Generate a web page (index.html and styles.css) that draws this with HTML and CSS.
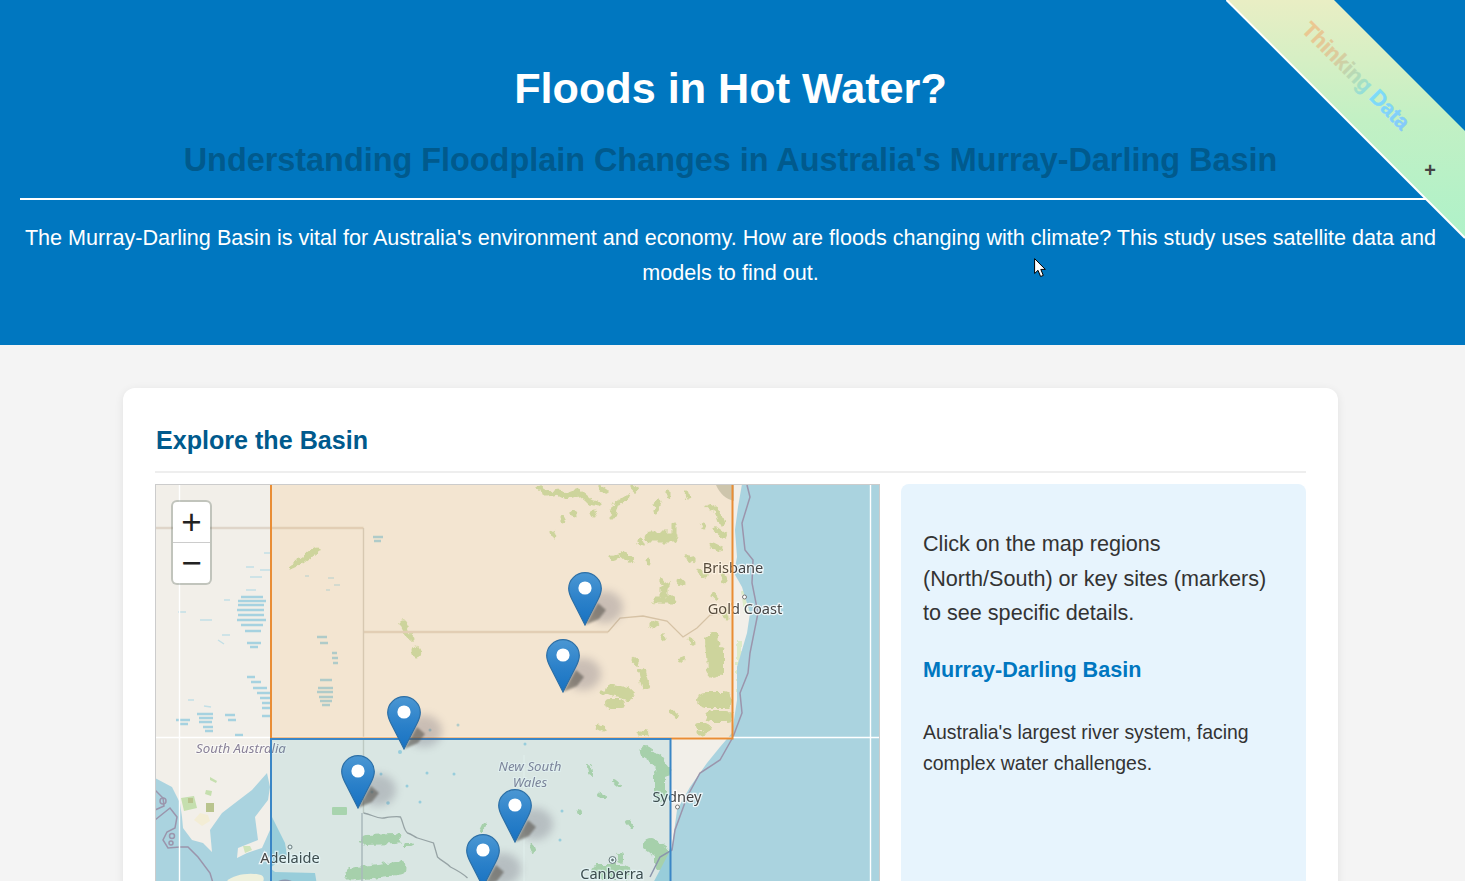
FILE: index.html
```html
<!DOCTYPE html>
<html lang="en">
<head>
  <meta charset="UTF-8" />
  <meta name="viewport" content="width=device-width, initial-scale=1.0"/>
  <title>Floods in Hot Water?</title>
  <link rel="stylesheet" href="styles.css">
</head>
<body>
  <header class="site-header">
    <h1>Floods in Hot Water?</h1>
    <h2 class="subtitle">Understanding Floodplain Changes in Australia's Murray-Darling Basin</h2>
    <hr class="header-rule" />
    <p class="intro">The Murray-Darling Basin is vital for Australia's environment and economy. How are floods changing with climate? This study uses satellite data and models to find out.</p>

    <!-- corner ribbon -->
    <svg class="ribbon" viewBox="1226 0 239 240" width="239" height="240" aria-label="Thinking Data">
      <defs>
        <linearGradient id="bandFill" gradientUnits="userSpaceOnUse" x1="0" y1="0" x2="0" y2="240">
          <stop offset="0" stop-color="#e9eec4"/>
          <stop offset="0.5" stop-color="#c2f0c4"/>
          <stop offset="1" stop-color="#aef2c9"/>
        </linearGradient>
        <linearGradient id="ribbonText" x1="0" y1="0" x2="1" y2="0">
          <stop offset="0" stop-color="#edc78f"/>
          <stop offset="0.3" stop-color="#dccb9c"/>
          <stop offset="0.55" stop-color="#a8dfc0"/>
          <stop offset="0.68" stop-color="#7cdcf8"/>
          <stop offset="1" stop-color="#86c8fb"/>
        </linearGradient>
      </defs>
      <polygon points="1226,0 1334,0 1465,131 1465,238" fill="url(#bandFill)"/>
      <line x1="1226.5" y1="0" x2="1465" y2="238" stroke="#fff" stroke-width="2"/>
      <text class="ribbon-text" x="1356" y="76" transform="rotate(45 1356 76)" dy="7" text-anchor="middle" fill="url(#ribbonText)" stroke="url(#ribbonText)">Thinking Data</text>
      <text class="ribbon-plus" x="1430" y="177" text-anchor="middle">+</text>
    </svg>
  </header>

  <main class="content">
    <section class="card">
      <h2 class="card-title">Explore the Basin</h2>
      <div class="explore-grid">
        <div class="map">
          <svg class="map-canvas" viewBox="156 485 723 498" width="723" height="498">
            <defs>
              <filter id="soft" x="-5%" y="-5%" width="110%" height="110%"><feGaussianBlur stdDeviation="0.6"/></filter>
              <filter id="labelSoft" x="-5%" y="-20%" width="110%" height="140%"><feGaussianBlur stdDeviation="0.25"/></filter>
              <filter id="rough" filterUnits="userSpaceOnUse" x="156" y="485" width="723" height="498">
                <feTurbulence type="fractalNoise" baseFrequency="0.16" numOctaves="2" seed="7" result="noise"/>
                <feDisplacementMap in="SourceGraphic" in2="noise" scale="7" xChannelSelector="R" yChannelSelector="G"/>
              </filter>
              <filter id="blurWide" x="-80%" y="-80%" width="260%" height="260%"><feGaussianBlur stdDeviation="4.5"/></filter>
              <filter id="blurTight" x="-30%" y="-30%" width="160%" height="160%"><feGaussianBlur stdDeviation="0.9"/></filter>
              <linearGradient id="pinFill" x1="0" y1="0" x2="0" y2="1">
                <stop offset="0" stop-color="#4b97d3"/>
                <stop offset="0.55" stop-color="#2a80c9"/>
                <stop offset="1" stop-color="#1872c2"/>
              </linearGradient>
              <g id="pin">
                <ellipse cx="20" cy="-18" rx="18" ry="16" fill="#5f5a6c" opacity="0.28" filter="url(#blurWide)"/>
                <path d="M0 0L13-22 21-15 14-6z" fill="#5a5650" opacity="0.6" filter="url(#blurTight)"/>
                <path d="M0 0L-13-25.5C-15-29.5-16.3-33-16.3-36.5-16.3-45-9-52.3 0-52.3S16.3-45 16.3-36.5C16.3-33 15-29.5 13-25.5z" fill="url(#pinFill)" stroke="#2c6fa6" stroke-width="1.2"/>
                <circle cx="0" cy="-37" r="6.6" fill="#fff"/>
              </g>
            </defs>

            <!-- base tiles -->
            <g filter="url(#soft)">
              <rect x="156" y="485" width="723" height="498" fill="#f2efe9"/>

              <!-- scrub and forest -->
              <g filter="url(#rough)">
                <g fill="none" stroke="#c8dcae" stroke-linecap="round" stroke-linejoin="round">
                  <g stroke-width="5">
                    <path d="M292 566l10-5"/><path d="M302 560l14-10" stroke-width="7"/>
                    <path d="M538 488l10 6 10-2 8 4 12-4 12 10 8 2"/><path d="M612 517l4-14"/><path d="M618 503l10-6"/>
                    <path d="M655 512l3-10"/><path d="M668 492v4"/><path d="M687 493l1 4"/><path d="M573 512l1 3"/>
                    <path d="M562 518l1 2"/><path d="M593 513l1 2"/><path d="M553 532l1 3"/><path d="M708 506l10 6 4 12"/>
                    <path d="M716 530l8 6"/><path d="M703 525l1 2"/><path d="M712 545l8 4"/><path d="M688 557l4 3"/>
                    <path d="M612 558l6-2"/><path d="M622 553l8 7"/><path d="M640 542l2 1"/><path d="M648 561v1"/>
                    <path d="M713 595l3 3"/><path d="M652 625l5-2"/><path d="M680 660l3-1"/><path d="M690 640l3 3"/>
                    <path d="M600 487l6 4"/><path d="M633 486l3 3"/><path d="M700 572l5 3"/><path d="M680 580l3 3"/>
                    <path d="M598 727l6 3"/><path d="M640 733l7 1"/><path d="M700 733l8-3"/><path d="M634 660l3 3"/>
                    <path d="M662 636l2 2"/><path d="M726 610l1 8"/><path d="M722 574l2 6"/><path d="M672 712l4 3"/>
                  </g>
                  <path d="M650 537h22" stroke-width="11"/><path d="M674 534v-10" stroke-width="5"/>
                  <path d="M662 582l6 4" stroke-width="5"/><path d="M656 600h16" stroke-width="7"/><path d="M664 588v12" stroke-width="7"/>
                  <path d="M712 640l2 30" stroke-width="14"/><path d="M720 650v22" stroke-width="8"/>
                  <path d="M706 700h18" stroke-width="16"/><path d="M712 716h14" stroke-width="12"/><path d="M698 726h8" stroke-width="6"/>
                  <path d="M612 690l16 4" stroke-width="12"/><path d="M610 704h10" stroke-width="10"/><path d="M602 692h4" stroke-width="5"/>
                  <path d="M642 672l4 14" stroke-width="8"/>
                  <path d="M403 624l3 6" stroke-width="7"/><path d="M406 632l6 6" stroke-width="5"/><path d="M416 650l1 3" stroke-width="9"/>
                </g>
                <g fill="none" stroke="#b9d6ab" stroke-linecap="round" stroke-linejoin="round">
                  <path d="M645 752l12 8 8 12" stroke-width="12"/><path d="M660 775v20" stroke-width="12"/>
                  <path d="M650 845l12 8v12" stroke-width="14"/><path d="M598 872h26" stroke-width="14"/><path d="M620 855v5" stroke-width="6"/>
                  <path d="M366 840l30-1" stroke-width="10"/><path d="M352 874l48-6" stroke-width="13"/>
                  <g stroke-width="4">
                    <path d="M590 765l1 8"/><path d="M615 782l4 3"/><path d="M578 810l3 3"/><path d="M628 822l3 4"/>
                    <path d="M405 845h6"/><path d="M532 845l1 6"/><path d="M485 825l-3 6"/><path d="M600 795l3 3"/>
                  </g>
                </g>
                <path d="M733 745l-14 14-14 20-14 22-12 20" fill="none" stroke="#d3e6bd" stroke-width="6"/>
                <path d="M739 640v70M743 590l3 24" fill="none" stroke="#dcebc8" stroke-width="4"/>
              </g>
              <rect x="332" y="807" width="15" height="8" rx="1" fill="#bcdbae"/>
              <g fill="#c5dfae"><path d="M181 798l13-2 3 12-13 3z"/><path d="M206 790l6 1-1 5-6-2z"/><path d="M210 777l7 4-1 2-6-3z"/></g>
              <g fill="#b9c48e"><rect x="206" y="803" width="8" height="9"/><rect x="188" y="798" width="5" height="5"/></g>
              <path d="M200 813l8 2 2 6-8 5-8-6z" fill="#f3edd5"/>

              <!-- salt lakes -->
              <g fill="none" stroke="#a6d2e0" stroke-width="2.6">
                <path d="M241 597h22M238 601h28M238 605h26M237 610h27M238 615h26M237 620h29M241 625h22M245 631h16"/>
                <path d="M247 643h14M250 647h8"/>
                <path d="M247 677h8M251 682h10M253 688h14M257 693h13M260 698h10M262 703h8M262 708h9M262 716h9"/>
                <path d="M197 714h16M199 718h14M199 722h13M203 727h10M205 731h8"/>
                <path d="M176 720h14M180 724h8M225 715h10M228 720h8M235 735h8"/>
                <path d="M320 680h12M318 688h15M317 692h16M319 697h14M320 701h12M322 705h8"/>
                <path d="M332 653h5M332 658h6M333 663h5M317 637h10M320 643h8"/>
                <path d="M373 537h10M374 541h7"/>
              </g>
              <g fill="none" stroke="#c2dfe6" stroke-width="1.4">
                <path d="M204 706l7 1M188 700h6M218 640l6 4M222 635h8M260 570h10M250 577h12M246 567h8M264 553h8"/>
                <path d="M305 576h4M328 578h6M334 585h6M326 590h4M246 590h10M224 600h6M178 612h8M200 620h12"/>
              </g>
              <g fill="#a9d3e1">
                <circle cx="400" cy="752" r="2"/><circle cx="372" cy="792" r="1.5"/><circle cx="427" cy="773" r="1.5"/>
                <circle cx="454" cy="774" r="1.5"/><circle cx="407" cy="786" r="1.5"/><circle cx="388" cy="803" r="1.8"/>
                <circle cx="381" cy="774" r="1.5"/><circle cx="420" cy="802" r="1.5"/><circle cx="479" cy="855" r="1.5"/>
                <circle cx="560" cy="840" r="1.5"/><circle cx="562" cy="811" r="1.5"/><circle cx="525" cy="744" r="1.5"/>
                <circle cx="430" cy="730" r="1.5"/><circle cx="458" cy="725" r="1.5"/><circle cx="560" cy="684" r="1"/>
              </g>

              <!-- state borders -->
              <g fill="none" stroke="#dfd5c9" stroke-width="2.400">
                <path d="M156 528H363.5"/>
                <path d="M364 632H608" />
                <path d="M363.5 528V813" stroke="#d3cfc6" stroke-width="1.400"/>
                <path d="M608 632L620 618 643 616 667 621 683 637 697 628 710 615 725 613 733 602" stroke="#d2c8b8" stroke-width="1.300"/>
              </g>
              <path d="M363.5 813c8 1 13 6 20 5s13-2 17-1c3 6 3 13 7 16 4 1 7 4 10 5l16 5 4 14c4 4 8 5 13 10 6 3 12 6 17 11" fill="none" stroke="#a8a4a4" stroke-width="1.3"/>
              <path d="M362 813V985" fill="none" stroke="#bdbdbd" stroke-width="1.5"/>
              <path d="M524 755V883" fill="none" stroke="#fff" stroke-width="1" opacity="0.6"/>

              <!-- urban bay -->
              <path d="M716 485h18v16c-8-2-14-7-18-16z" fill="#c8cbc0"/>

              <!-- water -->
              <g fill="#aad3df">
                <path d="M742 484L738 507 735 530 737 557 734 573 742 587 750 613 747 633 737 667 737 700 732 733 720 747 707 763 690 787 677 810 672 847 660 870 652 885H880V484z"/>
                <path d="M155 778L172 787 180 803 182 817 183 828 192 840 203 843 212 852 210 830 222 813 235 803 252 790 267 773 270 787 268 800 255 817 258 840 238 848 237 858 247 853 262 848 270 830 272 817 285 843 287 855 270 868 275 872 315 873 317 885H155z"/>
              </g>
              <path d="M227 881c6-6 22-9 34-6 4 2 3 6 1 8z" fill="#eef0dc"/>
              <path d="M243 846l7 0 2 4-7 3z" fill="#cfe4ba"/>

              <!-- maritime lines -->
              <g fill="none" stroke="#9b95ac" stroke-width="1.5">
                <path d="M747 485L750 497 742 523 745 550 753 560 752 583 758 613 750 653 748 673 740 693 742 713 733 737 720 760 700 773 687 797 675 830 672 850 660 857 650 877"/>
                <path d="M155 820L170 808 177 817 175 828 167 832 163 840 168 848 180 847 188 847 198 857 210 873 213 883"/>
                <path d="M155 790l8 8 1 8-9 4"/>
                <circle cx="163" cy="801" r="3"/><circle cx="172" cy="836" r="2.5"/><circle cx="171" cy="843" r="2"/>
                <path d="M275 884c5-5 15-5 20 0"/>
              </g>

              <!-- tile seams -->
              <g stroke="#fff" stroke-width="1.4">
                <path d="M179.500 485V883M870.500 485V883"/>
                <path d="M156 737.500H879"/>
              </g>
            </g>

            <!-- map labels -->
            <g filter="url(#labelSoft)">
              <g class="label-region">
                <text x="241" y="753">South Australia</text>
                <text x="530" y="771">New South</text>
                <text x="530" y="787">Wales</text>
              </g>
              <g class="label-city">
                <text x="733" y="573">Brisbane</text>
                <text x="745" y="614">Gold Coast</text>
                <text x="677" y="802">Sydney</text>
                <text x="612" y="879">Canberra</text>
                <text x="290" y="863">Adelaide</text>
              </g>
            </g>
            <g fill="#fff" stroke="#777" stroke-width="1">
              <circle cx="744.500" cy="597" r="2"/><circle cx="677.500" cy="807" r="2"/><circle cx="290" cy="847" r="2"/>
              <circle cx="612.500" cy="860" r="3.5"/><circle cx="612.500" cy="860" r="1" fill="#555"/>
            </g>

            <!-- region overlays -->
            <rect x="271" y="470" width="461.500" height="268.500" fill="#ff9000" fill-opacity="0.1" stroke="#e98d35" stroke-width="2"/>
            <rect x="271" y="739" width="399.500" height="260" fill="#00a0b0" fill-opacity="0.1" stroke="#3a86c6" stroke-width="2"/>

            <!-- site markers -->
            <use href="#pin" x="585" y="625"/>
            <use href="#pin" x="563" y="692"/>
            <use href="#pin" x="404" y="749"/>
            <use href="#pin" x="358" y="808"/>
            <use href="#pin" x="515" y="842"/>
            <use href="#pin" x="483" y="887"/>
          </svg>

          <div class="zoom-control">
            <span class="zoom-btn">+</span>
            <span class="zoom-btn">−</span>
          </div>
        </div>

        <aside class="info-panel">
          <p class="info-lead">Click on the map regions (North/South) or key sites (markers) to see specific details.</p>
          <h3>Murray-Darling Basin</h3>
          <p class="info-body">Australia's largest river system, facing complex water challenges.</p>
        </aside>
      </div>
    </section>
  </main>

  <!-- mouse pointer caught in the shot -->
  <svg class="cursor" viewBox="0 0 13 20" width="13" height="20">
    <path d="M.6.6V15.500L4 12.300 6.600 18.500 9.300 17.400 6.800 11.400H11.300z" fill="#fff" stroke="#000" stroke-width="1"/>
  </svg>
</body>
</html>
```

FILE: styles.css
```css
html, body { margin: 0; padding: 0; }
body {
  background: #f4f4f4; color: #333;
  font-family: "Liberation Sans", Arial, sans-serif;
  position: relative;
  height: 881px; overflow: hidden;
}

.site-header {
  background: #0077c0; color: #fff;
  height: 345px; box-sizing: border-box;
  padding: 62px 24px 0 20px;
  text-align: center;
  position: relative; overflow: hidden;
}
.site-header h1 { margin: 0; font-size: 43.200px; line-height: 52px; font-weight: bold; }
.subtitle { margin: 26px 0 0; color: #005a8d; font-size: 32.400px; line-height: 40px; font-weight: bold; }
.header-rule { border: 0; height: 2px; background: #fff; margin: 18px 0 0; }
.intro { margin: 20px 0 0; font-size: 21.600px; line-height: 35px; }

.ribbon { position: absolute; top: 0; right: 0; display: block; }
.ribbon-text { font: bold 21.500px "Liberation Sans", Arial, sans-serif; stroke-width: .4px; }
.ribbon-plus { font: bold 20px "Liberation Sans", Arial, sans-serif; fill: #444; }

.content { padding: 43px 4px 0 0; }
.card {
  background: #fff; border-radius: 12px;
  box-shadow: 0 2px 10px rgba(0,0,0,.08);
  width: 1215px; box-sizing: border-box; margin: 0 auto;
  padding: 34px 32px 32px;
}
.card-title {
  margin: 0 0 11px; padding: 0 0 12px 1px;
  color: #005a8d; font-size: 25.100px; line-height: 37px; font-weight: bold;
  border-bottom: 2px solid #eee;
}

.explore-grid { display: grid; grid-template-columns: 725px 1fr; gap: 21px; }
.map { position: relative; height: 500px; border: 1px solid #ccc; overflow: hidden; }
.map-canvas { display: block; }
.label-region text { font: italic 13.300px "Noto Sans", sans-serif; fill: #8a8298; text-anchor: middle; stroke: #fff; stroke-opacity: .6; stroke-width: 2px; paint-order: stroke; }
.label-city text { font: 14.600px "Noto Sans", sans-serif; fill: #444; text-anchor: middle; stroke: #fff; stroke-opacity: .8; stroke-width: 2.500px; paint-order: stroke; }

.zoom-control {
  position: absolute; left: 15px; top: 15px;
  width: 37px;
  background: #fff; background-clip: padding-box;
  border: 2.500px solid rgba(80,95,85,.3); border-radius: 6px;
}
.zoom-btn {
  display: block; height: 40px;
  text-align: center; font: 35px/39px "Liberation Sans", Arial, sans-serif; color: #222;
}
.zoom-btn + .zoom-btn { border-top: 1px solid #ccc; }

.info-panel { background: #e7f4fd; border-radius: 8px; padding: 43px 22px 22px; }
.info-lead { margin: 0; font-size: 21.600px; line-height: 34.600px; }
.info-panel h3 { margin: 22px 0 0; color: #0077c0; font-size: 21.600px; line-height: 34px; font-weight: bold; }
.info-body { margin: 30px 0 0; font-size: 19.450px; line-height: 31px; }

.cursor { position: absolute; left: 1034px; top: 258px; display: block; }
```
